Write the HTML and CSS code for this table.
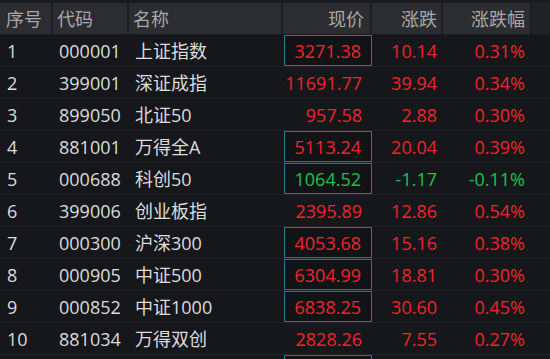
FILE: index.html
```html
<!DOCTYPE html>
<html lang="zh-CN">
<head>
<meta charset="utf-8">
<title>指数行情</title>
<link rel="stylesheet" href="styles.css">
</head>
<body>
<div class="topstrip"></div>
<div class="table">
  <div class="row head">
    <div class="c left">序号</div>
    <div class="c left">代码</div>
    <div class="c left">名称</div>
    <div class="c num price">现价</div>
    <div class="c num chg">涨跌</div>
    <div class="c num pct">涨跌幅</div>
    <div class="c tail"></div>
  </div>
  <div class="row">
    <div class="c left idx">1</div><div class="c left code">000001</div><div class="c left name">上证指数</div>
    <div class="c num price up boxed">3271.38</div><div class="c num chg up">10.14</div><div class="c num pct up">0.31%</div><div class="c tail"></div>
  </div>
  <div class="row">
    <div class="c left idx">2</div><div class="c left code">399001</div><div class="c left name">深证成指</div>
    <div class="c num price up">11691.77</div><div class="c num chg up">39.94</div><div class="c num pct up">0.34%</div><div class="c tail"></div>
  </div>
  <div class="row">
    <div class="c left idx">3</div><div class="c left code">899050</div><div class="c left name">北证50</div>
    <div class="c num price up">957.58</div><div class="c num chg up">2.88</div><div class="c num pct up">0.30%</div><div class="c tail"></div>
  </div>
  <div class="row">
    <div class="c left idx">4</div><div class="c left code">881001</div><div class="c left name">万得全A</div>
    <div class="c num price up boxed">5113.24</div><div class="c num chg up">20.04</div><div class="c num pct up">0.39%</div><div class="c tail"></div>
  </div>
  <div class="row">
    <div class="c left idx">5</div><div class="c left code">000688</div><div class="c left name">科创50</div>
    <div class="c num price down boxed">1064.52</div><div class="c num chg down">-1.17</div><div class="c num pct down">-0.11%</div><div class="c tail"></div>
  </div>
  <div class="row">
    <div class="c left idx">6</div><div class="c left code">399006</div><div class="c left name">创业板指</div>
    <div class="c num price up">2395.89</div><div class="c num chg up">12.86</div><div class="c num pct up">0.54%</div><div class="c tail"></div>
  </div>
  <div class="row">
    <div class="c left idx">7</div><div class="c left code">000300</div><div class="c left name">沪深300</div>
    <div class="c num price up boxed">4053.68</div><div class="c num chg up">15.16</div><div class="c num pct up">0.38%</div><div class="c tail"></div>
  </div>
  <div class="row">
    <div class="c left idx">8</div><div class="c left code">000905</div><div class="c left name">中证500</div>
    <div class="c num price up boxed">6304.99</div><div class="c num chg up">18.81</div><div class="c num pct up">0.30%</div><div class="c tail"></div>
  </div>
  <div class="row">
    <div class="c left idx">9</div><div class="c left code">000852</div><div class="c left name">中证1000</div>
    <div class="c num price up boxed">6838.25</div><div class="c num chg up">30.60</div><div class="c num pct up">0.45%</div><div class="c tail"></div>
  </div>
  <div class="row">
    <div class="c left idx">10</div><div class="c left code">881034</div><div class="c left name">万得双创</div>
    <div class="c num price up">2828.26</div><div class="c num chg up">7.55</div><div class="c num pct up">0.27%</div><div class="c tail"></div>
  </div>
  <div class="row">
    <div class="c left idx"></div><div class="c left code"></div><div class="c left name"></div>
    <div class="c num price up boxed"></div><div class="c num chg up"></div><div class="c num pct up"></div><div class="c tail"></div>
  </div>
</div>
</body>
</html>
```
FILE: styles.css
```css
html, body {
  margin: 0;
  padding: 0;
  background: #16171b;
  width: 550px;
  height: 359px;
  overflow: hidden;
}
body {
  font-family: "Open Sans", "Noto Sans CJK SC", sans-serif;
  font-size: 18px;
  color: #dcdcdc;
}
.topstrip {
  height: 3px;
  background: #1c1c1f;
}
.table {
  display: flex;
  flex-direction: column;
}
.row {
  display: grid;
  grid-template-columns: 53px 76px 154px 89px 71px 89px 18px;
  height: 32px;
  box-sizing: border-box;
  border-bottom: 1px solid #222327;
}
.row.head {
  background: #2c2d31;
  color: #a8a8a8;
  border-bottom: 1px solid #1a1b1e;
}
.row.head .c {
  border-right: 2px solid #1c1d20;
}
.row.head .tail {
  border-right: none;
  background: #222326;
}
.c {
  display: flex;
  align-items: center;
  box-sizing: border-box;
  white-space: nowrap;
  line-height: 1;
}
.left {
  justify-content: flex-start;
}
.row.head .left:first-child { padding-left: 6px; }
.row.head .left { padding-left: 4px; }
.idx { padding-left: 7px; }
.code { padding-left: 6px; }
.name { padding-left: 6px; }
.num {
  justify-content: flex-end;
}
.price { padding-right: 10px; }
.row.head .price { padding-right: 6px; }
.chg { padding-right: 6px; }
.pct { padding-right: 7px; }
.row.head .chg { padding-right: 4px; }
.row.head .pct { padding-right: 5px; }
.up { color: #f2232c; }
.down { color: #1ec24b; }
.boxed {
  border: 1px solid #1c7c88;
  background: #121317;
  margin: 0 0 0 1px;
}
```
